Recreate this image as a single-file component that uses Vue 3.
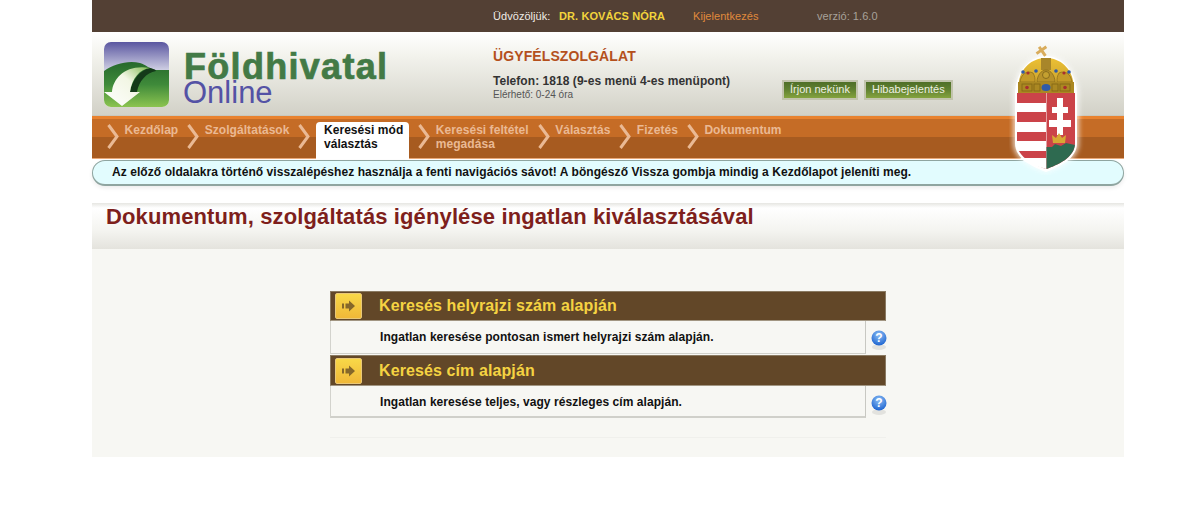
<template>
  <div class="page">
    <div class="top-bar">
      <span class="welcome">Üdvözöljük:</span>
      <span class="user-name">DR. KOVÁCS NÓRA</span>
      <a class="logout">Kijelentkezés</a>
      <span class="version">verzió: 1.6.0</span>
    </div>

    <div class="header">
      <div class="logo">
        <svg class="logo-mark" width="65" height="65" viewBox="0 0 65 65">
          <defs>
            <linearGradient id="sky" x1="0" y1="0" x2="0" y2="1">
              <stop offset="0" stop-color="#5a56a0" />
              <stop offset="0.45" stop-color="#d4d4e6" />
              <stop offset="0.6" stop-color="#ffffff" />
            </linearGradient>
            <linearGradient id="land" x1="0" y1="0" x2="0" y2="1">
              <stop offset="0" stop-color="#26692c" />
              <stop offset="0.5" stop-color="#3f8a3a" />
              <stop offset="1" stop-color="#8cc450" />
            </linearGradient>
            <linearGradient id="swoosh" x1="0" y1="1" x2="1" y2="0">
              <stop offset="0" stop-color="#ffffff" />
              <stop offset="0.6" stop-color="#f2f6e4" />
              <stop offset="1" stop-color="#7fb850" />
            </linearGradient>
            <clipPath id="logo-clip"><rect width="65" height="65" rx="7" /></clipPath>
          </defs>
          <g clip-path="url(#logo-clip)">
            <rect width="65" height="65" fill="url(#sky)" />
            <path d="M0 29 C10 22 24 18 36 21 C42 23 46 27 52 28 L65 28 V65 H0 Z" fill="url(#land)" />
            <path d="M26 50 C28 38 36 28 46 26 C50 27 52 28 52 29 C42 31 35 39 33 50 Z" fill="#143a19" />
            <path d="M8 50 C9 36 22 22 46 26 C36 27 28 36 26 50 L36 50 L18 64 L0 50 Z" fill="url(#swoosh)" />
          </g>
        </svg>
        <div class="logo-text">
          <div class="logo-main">Földhivatal</div>
          <div class="logo-sub">Online</div>
        </div>
      </div>

      <div class="support">
        <div class="support-title">ÜGYFÉLSZOLGÁLAT</div>
        <div class="support-phone">Telefon: 1818 (9-es menü 4-es menüpont)</div>
        <div class="support-hours">Elérhető: 0-24 óra</div>
      </div>

      <div class="header-buttons">
        <a class="green-btn">Írjon nekünk</a>
        <a class="green-btn">Hibabejelentés</a>
      </div>
    </div>

    <div class="nav">
      <div v-for="item in navItems" :key="item.label" class="nav-item">
        <svg class="chevron" width="12" height="25" viewBox="0 0 12 25">
          <path d="M1.5 1 L10 12.5 L1.5 24" fill="none" stroke="#eab994" stroke-width="3" />
        </svg>
        <div class="nav-label" :class="{ active: item.active }">
          <template v-for="(line, i) in item.label.split('|')" :key="i">
            <br v-if="i > 0" />{{ line }}
          </template>
        </div>
      </div>
    </div>

    <div class="notice">
      Az előző oldalakra történő visszalépéshez használja a fenti navigációs sávot! A böngésző Vissza gombja mindig a Kezdőlapot jeleníti meg.
    </div>

    <!-- coat of arms sits over the header, nav and notice -->
    <svg class="crest" width="76" height="132" viewBox="0 0 76 132">
      <defs>
        <filter id="halo" x="-20%" y="-20%" width="140%" height="140%">
          <feGaussianBlur stdDeviation="2.5" />
        </filter>
        <linearGradient id="gold" x1="0" y1="0" x2="0" y2="1">
          <stop offset="0" stop-color="#ecc034" />
          <stop offset="1" stop-color="#c09a2c" />
        </linearGradient>
      </defs>
      <path
        d="M4 52 C4 30 20 12 37 12 C54 12 70 30 70 52 V100 C70 116 52 125 37 130 C22 125 4 116 4 100 Z"
        fill="#fff"
        opacity="0.7"
        filter="url(#halo)"
      />
      <path
        d="M6 52 C6 30 20 13 37 13 C54 13 68 30 68 52 V100 C68 116 50 124 37 129 C24 124 6 116 6 100 Z"
        fill="#fff"
      />
      <g fill="none" stroke="#d9ac5c" stroke-width="3">
        <path d="M33 3 V14 M27 7 L39 7" transform="rotate(-35 33 8)" />
      </g>
      <path d="M9 50 L10 38 C12 26 22 15 37 15 C52 15 62 26 64 38 L65 50 Z" fill="url(#gold)" />
      <rect x="32" y="15" width="10" height="12" fill="#a8862a" />
      <path d="M28 39 C28 33 32 27 37 27 C42 27 46 33 46 39 Z" fill="#b8922a" stroke="#8a6c1a" stroke-width="0.8" />
      <circle cx="37" cy="32" r="3.5" fill="#c4a030" stroke="#7a5f18" stroke-width="0.8" />
      <path d="M11 39 C12 31 18 27 24 30 C26 33 26 36 26 39 Z M63 39 C62 31 56 27 50 30 C48 33 48 36 48 39 Z" fill="#c49a28" stroke="#8a6c1a" stroke-width="0.7" />
      <rect x="9" y="39" width="56" height="11" fill="#ab8822" />
      <g fill="none" stroke="#806414" stroke-width="0.8">
        <rect x="13" y="41" width="10" height="7" />
        <rect x="25" y="41" width="6" height="7" />
        <rect x="43" y="41" width="6" height="7" />
        <rect x="51" y="41" width="10" height="7" />
      </g>
      <g fill="#2f5aa8">
        <ellipse cx="37" cy="44.5" rx="4.5" ry="3.5" />
        <circle cx="14" cy="29" r="1.8" />
        <circle cx="27" cy="28" r="1.8" />
        <circle cx="47" cy="28" r="1.8" />
        <circle cx="60" cy="29" r="1.8" />
      </g>
      <g fill="#a83030">
        <circle cx="19" cy="30" r="1.6" />
        <circle cx="55" cy="30" r="1.6" />
        <circle cx="18" cy="44.5" r="1.8" />
        <circle cx="56" cy="44.5" r="1.8" />
      </g>
      <!-- shield, left half with stripes -->
      <path d="M8 50 H37 V126 C26 122 8 115 8 100 Z" fill="#cb4349" />
      <path d="M37.5 50 H66 V100 C66 115 48 122 37.5 126 Z" fill="#cb4349" />
      <g fill="#fff">
        <rect x="8" y="60" width="29" height="9" />
        <rect x="8" y="79" width="29" height="10" />
        <rect x="8" y="98" width="29" height="10" />
        <path d="M11 115 H37 V126 C27 123 16 120 11 115 Z" />
        <rect x="48" y="55" width="6" height="37" />
        <rect x="43" y="64" width="16" height="6" />
        <rect x="40" y="77" width="22" height="7" />
      </g>
      <path d="M37.5 126 V104 L43 104 L46 101 L52 103 L57 100 L66 102 V100 C66 115 48 122 37.5 126 Z" fill="#2e6a50" />
      <path d="M44 100 L43 92 L47 95 L50 90 L53 95 L57 92 L56 100 Z" fill="#d8a834" />
    </svg>

    <div class="title-band">
      <h1>Dokumentum, szolgáltatás igénylése ingatlan kiválasztásával</h1>
    </div>

    <div class="content">
      <div class="search-list">
        <div v-for="opt in options" :key="opt.title" class="search-option" :class="{ last: opt.last }">
          <div class="option-head">
            <span class="arrow-btn">
              <svg width="14" height="12" viewBox="0 0 14 12">
                <path d="M0 3.5 H2 V8.5 H0 Z M3.5 3.5 H7 V0.5 L13 6 L7 11.5 V8.5 H3.5 Z" fill="#85672a" />
              </svg>
            </span>
            <span class="option-title">{{ opt.title }}</span>
          </div>
          <div class="option-body">
            <div class="option-desc">{{ opt.desc }}</div>
            <div class="help-cell">
              <svg width="16" height="22" viewBox="0 0 16 22">
                <defs>
                  <radialGradient id="help-blue" cx="0.5" cy="0.3" r="0.7">
                    <stop offset="0" stop-color="#8fc0f5" />
                    <stop offset="1" stop-color="#1d64d0" />
                  </radialGradient>
                </defs>
                <ellipse cx="8" cy="17" rx="7" ry="3" fill="#e2e2de" />
                <circle cx="8" cy="8" r="7.5" fill="url(#help-blue)" />
                <text x="8" y="12" text-anchor="middle" class="help-mark">?</text>
              </svg>
            </div>
          </div>
        </div>
        <div class="list-spacer"></div>
        <div class="list-spacer"></div>
      </div>
    </div>
  </div>
</template>

<script setup>
const navItems = [
  { label: 'Kezdőlap' },
  { label: 'Szolgáltatások' },
  { label: 'Keresési mód|választás', active: true },
  { label: 'Keresési feltétel|megadása' },
  { label: 'Választás' },
  { label: 'Fizetés' },
  { label: 'Dokumentum' },
]

const options = [
  {
    title: 'Keresés helyrajzi szám alapján',
    desc: 'Ingatlan keresése pontosan ismert helyrajzi szám alapján.',
  },
  {
    title: 'Keresés cím alapján',
    desc: 'Ingatlan keresése teljes, vagy részleges cím alapján.',
    last: true,
  },
]
</script>

<style>
html,
body {
  margin: 0;
  background: #fff;
}
</style>

<style scoped>
.page {
  position: relative;
  width: 1032px;
  margin-left: 92px;
  font-family: "Liberation Sans", Arial, sans-serif;
}

.top-bar {
  display: flex;
  align-items: center;
  height: 32px;
  padding-left: 401px;
  background: #534034;
  font-size: 11px;
  letter-spacing: 0.05px;
}

.welcome {
  color: #f0ece6;
  width: 66px;
}

.user-name {
  color: #f2d43c;
  font-weight: 700;
  width: 134px;
  letter-spacing: 0.1px;
}

.logout {
  color: #e08a3c;
  width: 124px;
}

.version {
  color: #a8a29a;
}

.header {
  display: flex;
  height: 84px;
  background: linear-gradient(180deg, #ffffff 0%, #f2f2ec 30%, #d2d1c7 100%);
  border-bottom: 1px solid #c9c8be;
  box-sizing: border-box;
}

.logo {
  display: flex;
  width: 401px;
  padding: 10px 0 0 12px;
  box-sizing: border-box;
}

.logo-mark {
  display: block;
}

.logo-text {
  margin-left: 15px;
  padding-top: 8px;
}

.logo-main {
  color: #437a46;
  font-size: 36px;
  font-weight: 700;
  line-height: 34px;
  letter-spacing: 1.3px;
  -webkit-text-stroke: 0.7px #437a46;
}

.logo-sub {
  color: #5452a5;
  font-size: 31px;
  line-height: 26px;
  margin-top: -4px;
  margin-left: -1px;
}

.support {
  width: 289px;
  padding-top: 15px;
}

.support-title {
  color: #b4501c;
  font-size: 14px;
  font-weight: 700;
  line-height: 18px;
  letter-spacing: 0.1px;
}

.support-phone {
  margin-top: 9px;
  color: #333;
  font-size: 12px;
  font-weight: 700;
  line-height: 14px;
  letter-spacing: 0.05px;
}

.support-hours {
  color: #555;
  font-size: 10px;
  line-height: 14px;
}

.header-buttons {
  display: flex;
  gap: 6px;
  padding-top: 48px;
}

.green-btn {
  height: 20px;
  box-sizing: border-box;
  padding: 0 6px;
  border: 2px solid #c2c4ad;
  background: linear-gradient(180deg, #4f6f28 0%, #5f8030 45%, #84a33e 100%);
  color: #eef0e2;
  font-size: 11px;
  line-height: 15px;
}

.nav {
  display: flex;
  height: 43px;
  box-sizing: border-box;
  padding-left: 15px;
  border-top: 3px solid #e8822f;
  border-bottom: 1px solid #e9a878;
  background: linear-gradient(180deg, #c56c26 0%, #c56c26 46%, #a75b20 46%, #a75b20 100%);
}

.nav-item {
  display: flex;
  align-items: flex-start;
  margin-right: 9px;
}

.chevron {
  flex: none;
  margin: 5px 5.5px 0 0;
}

.nav-label {
  padding-top: 4px;
  color: #eab994;
  font-size: 12px;
  font-weight: 700;
  line-height: 14px;
  letter-spacing: 0.05px;
  white-space: nowrap;
}

.nav-label.active {
  height: 37px;
  box-sizing: border-box;
  margin: 3px 0 0 0;
  padding: 1px 6px 0 8px;
  border-radius: 4px 4px 0 0;
  background: #fff;
  color: #111;
}

.notice {
  margin-top: 1px;
  height: 26px;
  box-sizing: border-box;
  padding-left: 19px;
  border: 1px solid #8fa5a0;
  border-bottom-width: 2px;
  border-radius: 13px;
  background: #e2fcfe;
  color: #111;
  font-size: 12px;
  font-weight: 700;
  line-height: 23px;
  letter-spacing: 0.07px;
  white-space: nowrap;
  box-shadow: 0 2px 4px rgba(0, 0, 0, 0.08);
}

.crest {
  position: absolute;
  left: 917px;
  top: 43px;
}

.title-band {
  margin-top: 17px;
  height: 46px;
  box-sizing: border-box;
  background: linear-gradient(180deg, #e6e6e2 0, #ffffff 5px, #f4f4f0 60%, #e4e3dd 100%);
}

.title-band h1 {
  margin: 0;
  padding: 0 0 0 14px;
  color: #7e1f1c;
  font-size: 22px;
  font-weight: 700;
  line-height: 28px;
  letter-spacing: 0.12px;
}

.content {
  height: 208px;
  background: #f7f7f3;
  padding-top: 42px;
  box-sizing: border-box;
}

.search-list {
  width: 556px;
  margin-left: 238px;
}

.search-option + .search-option {
  margin-top: 1px;
}

.option-head {
  display: flex;
  align-items: center;
  height: 30px;
  background: #624728;
  border: 1px solid #8a7a62;
  border-bottom-color: #a29682;
  box-sizing: border-box;
}

.search-option.last .option-head {
  height: 31px;
}

.arrow-btn {
  display: flex;
  align-items: center;
  justify-content: center;
  width: 27px;
  height: 26px;
  margin-left: 4px;
  box-sizing: border-box;
  border: 1px solid #e9c878;
  border-radius: 2px;
  background: linear-gradient(180deg, #f8d848 0%, #f0b838 100%);
}

.option-title {
  margin-left: 17px;
  color: #f5d342;
  font-size: 16px;
  font-weight: 700;
  letter-spacing: 0.1px;
}

.option-body {
  display: flex;
}

.option-desc {
  width: 536px;
  height: 33px;
  box-sizing: border-box;
  padding: 8px 0 0 49px;
  border-left: 1px solid #d3d3cd;
  border-right: 1px solid #c8c8c2;
  border-bottom: 1px solid #d0d0ca;
  color: #111;
  font-size: 12px;
  font-weight: 700;
  line-height: 16px;
  letter-spacing: 0.06px;
}

.search-option.last .option-desc {
  height: 32px;
  border-bottom-width: 2px;
}

.help-cell {
  width: 20px;
  padding: 9px 0 0 4.5px;
  box-sizing: border-box;
}

.help-cell svg {
  display: block;
}

.help-mark {
  fill: #fff;
  font-size: 12px;
  font-weight: 700;
}

.list-spacer {
  height: 19px;
  border-bottom: 1px solid #f0f0ec;
}
</style>
